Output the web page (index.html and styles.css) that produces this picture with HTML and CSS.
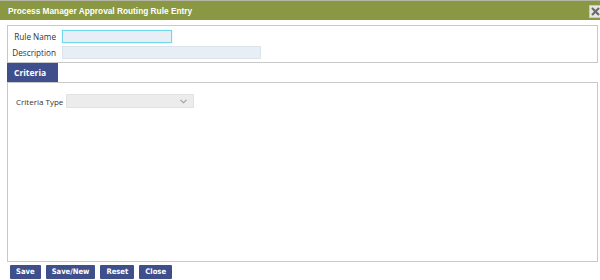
FILE: index.html
```html
<!DOCTYPE html>
<html>
<head>
<meta charset="utf-8">
<link rel="stylesheet" href="styles.css">
</head>
<body>
<div class="dialog">
  <div class="titlebar">
    <span class="title">Process Manager Approval Routing Rule Entry</span>
    <span class="close"><svg width="9" height="9" viewBox="0 0 9 9"><path d="M1 1L8 8M8 1L1 8" stroke="#6b6b6b" stroke-width="2.2"/></svg></span>
  </div>
  <div class="content">
    <div class="panel top">
      <div class="row">
        <label class="lbl">Rule Name</label>
        <input class="field focus" type="text">
      </div>
      <div class="row">
        <label class="lbl">Description</label>
        <input class="field wide" type="text">
      </div>
    </div>
    <div class="tabs"><span class="tab">Criteria</span></div>
    <div class="panel bottom">
      <div class="row crit">
        <label class="lbl2">Criteria Type</label>
        <div class="select"><svg width="7" height="5" viewBox="0 0 7 5"><path d="M0.5 0.8L3.5 3.8L6.5 0.8" fill="none" stroke="#9a9a9a" stroke-width="1.1"/></svg></div>
      </div>
    </div>
    <div class="buttons">
      <button class="btn">Save</button>
      <button class="btn">Save/New</button>
      <button class="btn">Reset</button>
      <button class="btn">Close</button>
    </div>
  </div>
</div>
</body>
</html>
```
FILE: styles.css
```css
html, body {
  margin: 0;
  padding: 0;
  background: #fff;
  width: 600px;
  height: 280px;
  overflow: hidden;
}
.dialog {
  border-top: 1px solid #b5b5a5;
  font-family: "Open Sans", "Noto Sans", sans-serif;
}
.titlebar {
  height: 19px;
  background: #8a9844;
  display: flex;
  align-items: center;
  justify-content: space-between;
}
.title {
  color: #fff;
  font-family: "Liberation Sans", Arial, sans-serif;
  font-weight: bold;
  font-size: 8.3px;
  padding-left: 8px;
}
.close {
  width: 11px;
  height: 13px;
  background: #e6e6e6;
  border: 1px solid #c9c9c9;
  border-right: none;
  display: flex;
  align-items: center;
  justify-content: center;
  box-sizing: border-box;
  margin-top: 1px;
}
.content {
  padding: 5px 2px 0 7px;
}
.panel {
  border: 1px solid #c8c8c8;
  box-sizing: border-box;
}
.panel.top {
  height: 38px;
  padding-top: 4px;
  display: flex;
  flex-direction: column;
  gap: 3px;
}
.row {
  display: flex;
  align-items: center;
}
.lbl {
  width: 48px;
  text-align: right;
  font-size: 8.2px;
  color: #333;
  margin-right: 6px;
  white-space: nowrap;
}
.field {
  height: 13px;
  box-sizing: border-box;
  background: #e8eef6;
  border: 1px solid #dde3ea;
  padding: 0;
  margin: 0;
  width: 199px;
}
.field.focus {
  width: 110px;
  border: 1px solid #6fd8ef;
  box-shadow: 0 0 1px #8be3f4;
  outline: none;
}
.tabs {
  display: flex;
}
.tab {
  width: 51px;
  height: 19px;
  background: #3e4f8c;
  color: #fff;
  font-weight: bold;
  font-size: 8.5px;
  display: flex;
  align-items: center;
  padding-left: 7px;
  box-sizing: border-box;
}
.panel.bottom {
  height: 180px;
  padding: 11px 0 0 8px;
}
.lbl2 {
  font-size: 8px;
  color: #333;
  width: 50px;
  white-space: nowrap;
}
.select {
  width: 128px;
  height: 14px;
  box-sizing: border-box;
  background: #ececec;
  border: 1px solid #e2e2e2;
  display: flex;
  align-items: center;
  justify-content: flex-end;
  padding-right: 6px;
}
.buttons {
  display: flex;
  gap: 5px;
  padding: 3px 0 0 3px;
}
.btn {
  background: #3e4f8c;
  color: #fff;
  border: none;
  border-radius: 1px;
  font-family: "DejaVu Sans Condensed", "DejaVu Sans", sans-serif;
  font-weight: bold;
  font-size: 7.6px;
  height: 14px;
  padding: 0 6px;
  margin: 0;
  line-height: 14px;
}
```
